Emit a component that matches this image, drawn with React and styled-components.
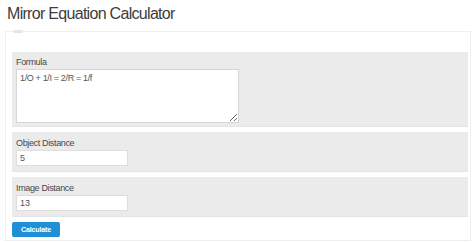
import styled, { createGlobalStyle } from "styled-components";

const GlobalStyle = createGlobalStyle`
  body {
    margin: 0;
    background: #fff;
    font-family: "Liberation Sans", Arial, sans-serif;
    color: #333;
  }
`;

const Page = styled.div`
  width: 474px;
  height: 242px;
  padding: 0 3px 0 5px;
  box-sizing: border-box;
  overflow: hidden;
`;

const Title = styled.h1`
  margin: 0;
  padding: 4px 0 0 2px;
  height: 31px;
  box-sizing: border-box;
  font-size: 16px;
  font-weight: 400;
  letter-spacing: -0.7px;
  line-height: 20px;
  color: #3c3c3c;
`;

const Card = styled.div`
  position: relative;
  border: 1px solid #f0f0f0;
  border-bottom-color: #ececec;
  background: #fff;
  padding: 20px 2px 3px 6px;
  display: flex;
  flex-direction: column;
  gap: 5px;
`;

const Tab = styled.span`
  position: absolute;
  top: -2px;
  left: 7px;
  width: 10px;
  height: 3px;
  border-radius: 2px;
  background: #e6e6e6;
`;

const Panel = styled.div`
  background: #ebebeb;
  border-bottom: 1px solid #e4e4e4;
  padding: ${(p) => (p.$tall ? "4px 4px 3px" : "5px 4px 5px")};
  display: flex;
  flex-direction: column;
  gap: 1px;
`;

const Label = styled.label`
  font-size: 9px;
  letter-spacing: -0.35px;
  line-height: 12px;
  color: #484848;
`;

const Input = styled.input`
  width: 112px;
  height: 16px;
  box-sizing: border-box;
  border: 1px solid #dedede;
  background: #fff;
  padding: 0 3px;
  font-family: "Liberation Sans", Arial, sans-serif;
  font-size: 9px;
  color: #555;
  outline: none;
`;

const Area = styled.textarea`
  width: 223px;
  height: 54px;
  box-sizing: border-box;
  border: 1px solid #d6d6d6;
  background: #fff;
  padding: 3px 3px;
  margin: 0;
  font-family: "Liberation Sans", Arial, sans-serif;
  font-size: 9px;
  letter-spacing: -0.35px;
  color: #555;
  resize: both;
  outline: none;
  display: block;
`;

const Button = styled.button`
  align-self: flex-start;
  width: 48px;
  height: 15px;
  border: none;
  border-radius: 2px;
  background: #1f8fd6;
  color: #fff;
  font-family: "Liberation Sans", Arial, sans-serif;
  font-size: 7.2px;
  font-weight: 700;
  letter-spacing: -0.2px;
  padding: 0;
`;

export default function App() {
  return (
    <>
      <GlobalStyle />
      <Page>
        <Title>Mirror Equation Calculator</Title>
        <Card>
          <Tab />
          <Panel $tall>
            <Label>Formula</Label>
            <Area defaultValue="1/O + 1/I = 2/R = 1/f" />
          </Panel>
          <Panel>
            <Label>Object Distance</Label>
            <Input defaultValue="5" />
          </Panel>
          <Panel>
            <Label>Image Distance</Label>
            <Input defaultValue="13" />
          </Panel>
          <Button>Calculate</Button>
        </Card>
      </Page>
    </>
  );
}
